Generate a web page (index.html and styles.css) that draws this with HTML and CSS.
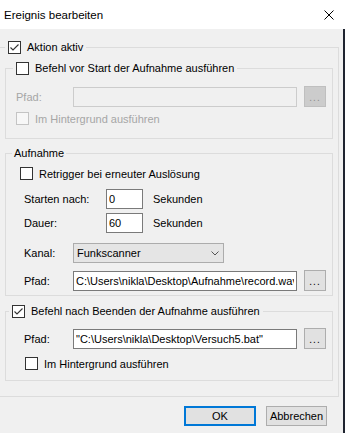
FILE: index.html
```html
<!DOCTYPE html>
<html lang="de">
<head>
    <meta charset="UTF-8">
    <title>Ereignis bearbeiten</title>
    <link rel="stylesheet" href="styles.css">
</head>
<body>
    <div class="window">
        <div class="titlebar">
            <span class="caption">Ereignis bearbeiten</span>
            <svg class="close" width="10" height="10" viewBox="0 0 10 10"><path d="M0.5 0.5L9.5 9.5M9.5 0.5L0.5 9.5" stroke="#000" stroke-width="1" fill="none"/></svg>
        </div>
        <div class="dialog">
            <div class="group outer">
                <div class="legend check">
                    <span class="cb checked"><svg width="11" height="11" viewBox="0 0 11 11"><path d="M1.5 5.5L4 8L9.5 2.5" stroke="#333" stroke-width="1.1" fill="none"/></svg></span>
                    <span>Aktion aktiv</span>
                </div>

                <!-- Befehl vor Start -->
                <div class="group before">
                    <div class="legend check">
                        <span class="cb"></span>
                        <span>Befehl vor Start der Aufnahme ausführen</span>
                    </div>
                    <div class="row path-row disabled">
                        <span class="label">Pfad:</span>
                        <input type="text" class="field path" value="" disabled>
                        <span class="browse">...</span>
                    </div>
                    <div class="check sub disabled">
                        <span class="cb"></span>
                        <span>Im Hintergrund ausführen</span>
                    </div>
                </div>

                <!-- Aufnahme -->
                <div class="group record">
                    <div class="legend">Aufnahme</div>
                    <div class="check retrigger">
                        <span class="cb"></span>
                        <span>Retrigger bei erneuter Auslösung</span>
                    </div>
                    <div class="row start-row">
                        <span class="label wide">Starten nach:</span>
                        <input type="text" class="field num" value="0">
                        <span class="unit">Sekunden</span>
                    </div>
                    <div class="row dur-row">
                        <span class="label wide">Dauer:</span>
                        <input type="text" class="field num" value="60">
                        <span class="unit">Sekunden</span>
                    </div>
                    <div class="row chan-row">
                        <span class="label">Kanal:</span>
                        <div class="select">
                            <span>Funkscanner</span>
                            <svg width="8" height="5" viewBox="0 0 8 5"><path d="M0.5 0.5L4 4L7.5 0.5" stroke="#555" stroke-width="1" fill="none"/></svg>
                        </div>
                    </div>
                    <div class="row path-row rec-path">
                        <span class="label">Pfad:</span>
                        <input type="text" class="field path" value="C:\Users\nikla\Desktop\Aufnahme\record.wav">
                        <span class="browse">...</span>
                    </div>
                </div>

                <!-- Befehl nach Beenden -->
                <div class="group after">
                    <div class="legend check">
                        <span class="cb checked"><svg width="11" height="11" viewBox="0 0 11 11"><path d="M1.5 5.5L4 8L9.5 2.5" stroke="#333" stroke-width="1.1" fill="none"/></svg></span>
                        <span>Befehl nach Beenden der Aufnahme ausführen</span>
                    </div>
                    <div class="row path-row">
                        <span class="label">Pfad:</span>
                        <input type="text" class="field path" value="&quot;C:\Users\nikla\Desktop\Versuch5.bat&quot;">
                        <span class="browse">...</span>
                    </div>
                    <div class="check sub">
                        <span class="cb"></span>
                        <span>Im Hintergrund ausführen</span>
                    </div>
                </div>
            </div>

            <div class="buttons">
                <button class="btn default">OK</button>
                <button class="btn">Abbrechen</button>
            </div>
        </div>
    </div>
</body>
</html>
```

FILE: styles.css
```css
*{box-sizing: border-box;}
body{margin: 0; font-family: "Liberation Sans", Arial, sans-serif; font-size: 11px; color: #000; background: #fff;}
input,button{font-family: inherit; font-size: 11px; margin: 0; outline: none;}

.window{width: 345px; height: 433px; overflow: hidden;}
.titlebar{height: 29px; background: #fff; display: flex; align-items: center; justify-content: space-between; padding: 0 11px 0 4px;}
.titlebar .caption{font-size: 11.5px;}
.dialog{height: 404px; background: #f0f0f0; border-right: 2px solid #1f2430; padding-top: 18px;}

/* groups */
.group{border: 1px solid #dcdcdc;}
.outer{margin: 0 4px 0 -2px; padding: 0 5px 15px 6px;}
.legend{display: flex; align-items: center; width: max-content; height: 13px; line-height: 13px; margin-top: -7px; padding: 0 3px; background: #f0f0f0;}
.outer > .legend{margin-left: 0;}
.before{margin-top: 14px; padding-bottom: 13px;}
.before > .legend{margin-left: 7px;}
.record{margin-top: 14px; padding-bottom: 4px;}
.record > .legend{margin-left: 6px; padding: 0 2px;}
.after{margin-top: 15px; padding-bottom: 10px;}
.after > .legend{margin-left: 3px;}

/* checkboxes */
.check{display: flex; align-items: center; gap: 6px; height: 13px;}
.cb{width: 13px; height: 13px; border: 1px solid #333; background: #fff; flex: none; display: flex; align-items: center; justify-content: center;}
.disabled{color: #a6a6a6;}
.disabled .cb{border-color: #c4c4c4; background: #f7f7f7;}
.before .sub{margin: 5px 0 0 10px;}
.after .sub{margin: 8px 0 0 19px;}
.retrigger{margin: 7px 0 0 14px;}

/* rows */
.row{display: flex; align-items: center;}
.label{width: 57px; margin-left: 10px;}
.path-row{height: 21px; margin-top: 11px;}
.record .label,.after .label{width: 49px; margin-left: 18px;}
.record .label.wide{width: 82px;}
.start-row{height: 20px; margin-top: 9px;}
.dur-row{height: 20px; margin-top: 4px;}
.chan-row{height: 20px; margin-top: 10px;}
.rec-path{margin-top: 7px;}
.after .path-row{margin-top: 10px;}

.field{height: 20px; border: 1px solid #7a7a7a; background: #fff; padding: 0 2px; color: #000;}
.field.path{width: 224px;}
.field.num{width: 37px;}
.field:disabled{border-color: #cccccc; background: #f0f0f0;}
.unit{margin-left: 10px;}

.browse{width: 22px; height: 21px; margin-left: 7px; border: 1px solid #adadad; background: #e1e1e1; display: flex; align-items: center; justify-content: center; font-size: 10px; letter-spacing: 1px; padding-top: 1px;}
.disabled .browse{background: #cccccc; border-color: #bfbfbf; color: #8c8c8c;}

.select{width: 151px; height: 20px; border: 1px solid #acacac; background: #e5e5e5; display: flex; align-items: center; justify-content: space-between; padding: 0 4px 0 3px;}

/* buttons */
.buttons{display: flex; justify-content: flex-end; gap: 10px; margin: 9px 16px 0 0;}
.btn{height: 20px; border: 1px solid #adadad; background: #e1e1e1; padding: 0; color: #000;}
.btn.default{width: 72px; border: 2px solid #0078d7;}
.btn:not(.default){width: 61px;}
```
